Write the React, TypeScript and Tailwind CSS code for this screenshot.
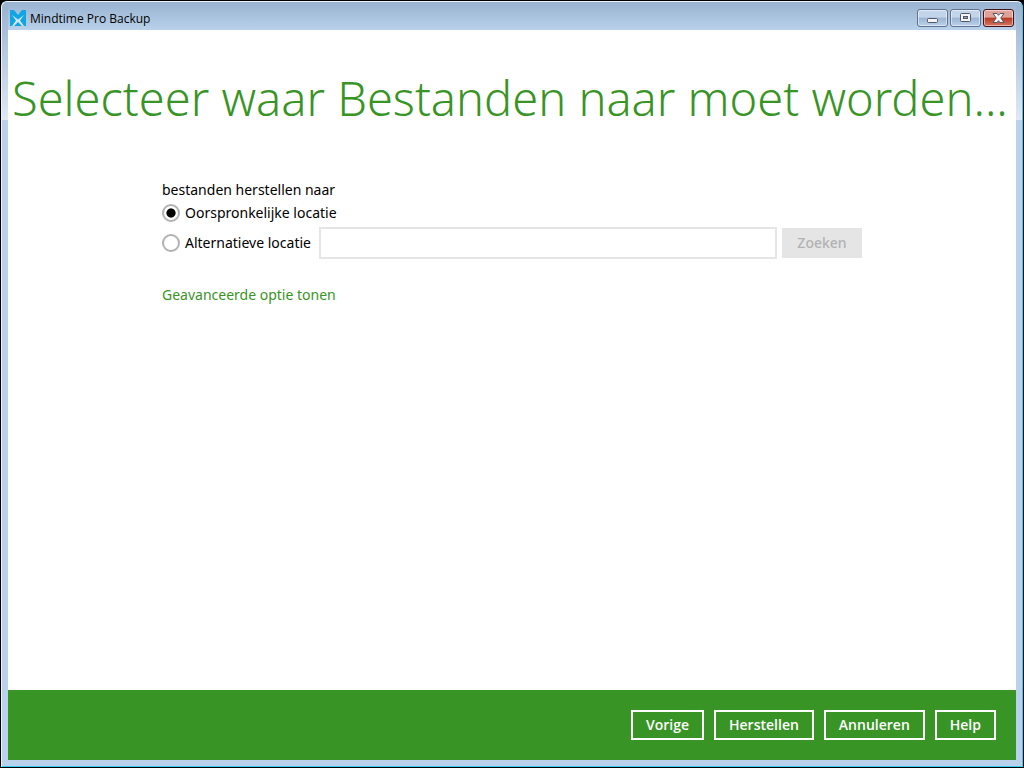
import type { ButtonHTMLAttributes, InputHTMLAttributes, ReactNode } from "react";
import { useState } from "react";

function Logo() {
  return (
    <svg viewBox="0 0 16 16" className="size-4 shrink-0" aria-hidden="true">
      <path fill="#12a5e4" d="M0 0h4l4 5 4-5h4v16H0z" />
      <path fill="#d3e6f4" d="M2 5l6 4.500L14 5l-4 5.500 4 5.500h-2l-4-4-4 4H2l4-5.500z" />
    </svg>
  );
}

function CaptionButton({ label, close, children }: { label: string; close?: boolean; children: ReactNode }) {
  const tone = close
    ? "border-[#43101a] bg-linear-to-b from-[#e0a298] from-45% via-[#b8371f] via-50% to-[#d47562]"
    : "border-[#61728d] bg-linear-to-b from-[#c2d5ea] from-45% via-[#9ab5d3] via-50% to-[#b9d1ea]";
  return (
    <button
      type="button"
      aria-label={label}
      className={`flex h-[18px] w-[31px] items-center justify-center rounded-[3px] border shadow-[inset_0_0_0_1px_#ffffff80] ${tone}`}
    >
      {children}
    </button>
  );
}

function TitleBar() {
  return (
    <header className="flex h-7 shrink-0 items-center bg-linear-to-b from-[#98b2d0] to-[#b9d1ea] pt-1 pl-0.5">
      <Logo />
      <span className="ml-1 grow pt-px text-[12px] leading-4">Mindtime Pro Backup</span>
      <div className="mr-0.5 flex gap-0.5">
        <CaptionButton label="Minimaliseren">
          <svg viewBox="0 0 13 12" className="h-3 w-[13px]">
            <rect x="1.500" y="6.500" width="10" height="4" rx="1" fill="#f4f4f4" stroke="#535666" />
          </svg>
        </CaptionButton>
        <CaptionButton label="Maximaliseren">
          <svg viewBox="0 0 13 12" className="h-3 w-[13px]">
            <rect x="1.500" y="1.500" width="10" height="8" rx="1" fill="#f4f4f4" stroke="#535666" />
            <rect x="4.500" y="4.500" width="4" height="2" fill="#8fa9c8" stroke="#535666" />
          </svg>
        </CaptionButton>
        <CaptionButton label="Sluiten" close>
          <svg viewBox="0 0 13 12" className="h-3 w-[13px]">
            <path
              fill="#f6f6f6"
              stroke="#535666"
              d="M1 1.500h4L6.500 3.300 8 1.500h4L8.800 6l3.200 4.500H8L6.500 8.700 5 10.500H1L4.200 6z"
            />
          </svg>
        </CaptionButton>
      </div>
    </header>
  );
}

function Radio({ children, ...props }: InputHTMLAttributes<HTMLInputElement>) {
  return (
    <label className="flex min-w-[152px] shrink-0 items-center gap-[5px]">
      <input
        type="radio"
        className="size-[18px] appearance-none rounded-full border-2 border-[#b2b2b2] bg-white checked:bg-radial checked:from-black checked:from-[4px] checked:to-white checked:to-[5px]"
        {...props}
      />
      {children}
    </label>
  );
}

function FooterButton(props: ButtonHTMLAttributes<HTMLButtonElement>) {
  return <button type="button" className="h-[30px] border-2 border-white px-[13px] font-semibold text-white" {...props} />;
}

export default function App() {
  const [target, setTarget] = useState("original");
  const alternative = target === "alternative";
  return (
    <div className="flex min-h-screen flex-col border border-black bg-black font-['Open_Sans',sans-serif] text-[14px] leading-5 text-black">
      <div className="flex grow flex-col rounded-t-md border border-t-[#eef4fb] border-r-[#2fd0f4] border-b-[#2fd0f4] border-l-[#eef4fb] bg-[#b9d1ea] bg-linear-to-b from-[#98b2d0] to-[#dfe9f5] bg-size-[100%_118px] bg-no-repeat px-1.5 pb-1.5">
        <TitleBar />
        <main className="grow bg-white">
          <h1 className="pt-[35px] pl-1 font-['Noto_Sans',sans-serif] text-[47px] leading-[66px] font-light whitespace-nowrap text-[#399426]">
            Selecteer waar Bestanden naar moet worden...
          </h1>
          <form className="mx-auto mt-[49px] w-[700px] max-w-full font-['Noto_Sans',sans-serif]">
            <fieldset>
              <legend>bestanden herstellen naar</legend>
              <div className="mt-[3px] flex">
                <Radio name="target" checked={!alternative} onChange={() => setTarget("original")}>
                  Oorspronkelijke locatie
                </Radio>
              </div>
              <div className="mt-1 flex items-center gap-[5px]">
                <Radio name="target" checked={alternative} onChange={() => setTarget("alternative")}>
                  Alternatieve locatie
                </Radio>
                <input
                  type="text"
                  aria-label="Pad van alternatieve locatie"
                  disabled={!alternative}
                  className="h-8 min-w-0 grow border-2 border-[#e5e5e5] bg-white px-2"
                />
                <button
                  type="button"
                  disabled={!alternative}
                  className="h-[30px] w-20 bg-[#e5e5e5] font-medium text-[#b2b2b2]"
                >
                  Zoeken
                </button>
              </div>
            </fieldset>
            <a href="#advanced" className="mt-[26px] inline-block text-[#399426]">
              Geavanceerde optie tonen
            </a>
          </form>
        </main>
        <footer className="flex h-[70px] shrink-0 items-center justify-end gap-2.5 bg-[#399426] px-5">
          <FooterButton>Vorige</FooterButton>
          <FooterButton>Herstellen</FooterButton>
          <FooterButton>Annuleren</FooterButton>
          <FooterButton>Help</FooterButton>
        </footer>
      </div>
    </div>
  );
}
